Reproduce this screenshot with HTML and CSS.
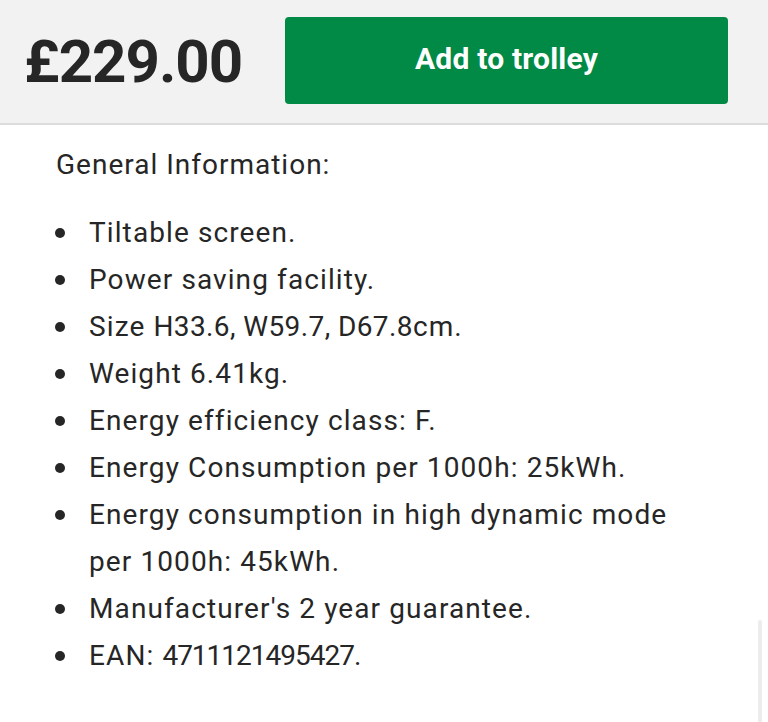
FILE: index.html
```html
<!DOCTYPE html>
<html lang="en">
<head>
<meta charset="utf-8">
<link rel="stylesheet" href="styles.css">
</head>
<body>
<div class="buybar">
  <div class="price">£229.00</div>
  <button class="add">Add to trolley</button>
</div>
<div class="content">
  <p class="heading">General Information:</p>
  <ul class="specs">
    <li>Tiltable screen.</li>
    <li>Power saving facility.</li>
    <li>Size <span class="dims">H33.6, W59.7, D67.8</span>cm.</li>
    <li>Weight 6.41kg.</li>
    <li>Energy efficiency class: F.</li>
    <li>Energy Consumption per 1000h: 25kWh.</li>
    <li>Energy consumption in high dynamic mode per 1000h: 45kWh.</li>
    <li>Manufacturer's 2 year guarantee.</li>
    <li>EAN: <span class="ean">4711121495427.</span></li>
  </ul>
</div>
<div class="scrollthumb"></div>
</body>
</html>
```

FILE: styles.css
```css
html, body {
  margin: 0;
  padding: 0;
  background: #fff;
  font-family: Roboto, "Liberation Sans", sans-serif;
  color: #262626;
}
body {
  width: 768px;
  height: 722px;
  overflow: hidden;
  position: relative;
}
.buybar {
  display: flex;
  align-items: center;
  box-sizing: border-box;
  height: 125px;
  padding: 0 40px 0 24px;
  background: #f2f2f2;
  border-bottom: 2px solid #dcdcdc;
  gap: 42px;
}
.price {
  font-size: 60px;
  font-weight: 700;
  letter-spacing: -1px;
  color: #262626;
  width: 219px;
  white-space: nowrap;
}
.add {
  flex: 1;
  height: 87px;
  margin-top: -2px;
  padding: 0 0 4px;
  border: none;
  border-radius: 4px;
  background: #008a45;
  color: #fff;
  font-family: inherit;
  font-size: 30px;
  font-weight: 700;
  letter-spacing: 0.2px;
}
.content {
  padding: 0 56px;
}
.heading {
  margin: 22px 0 0;
  font-size: 28px;
  line-height: 36px;
  letter-spacing: 1px;
}
.specs {
  list-style: none;
  margin: 26px 0 0;
  padding: 0;
  font-size: 28px;
  line-height: 47px;
  letter-spacing: 1.1px;
}
.specs li {
  padding-left: 33px;
  text-indent: -33px;
}
.specs li::before {
  content: "";
  display: inline-block;
  width: 10px;
  height: 10px;
  margin-left: -1px;
  margin-right: 24px;
  border-radius: 50%;
  background: #262626;
  vertical-align: 4px;
}
.dims {
  letter-spacing: 0.4px;
}
.ean {
  letter-spacing: -1px;
}
.scrollthumb {
  position: absolute;
  right: 6px;
  top: 620px;
  width: 4px;
  height: 110px;
  border-radius: 2px;
  background: #ececec;
}
```
